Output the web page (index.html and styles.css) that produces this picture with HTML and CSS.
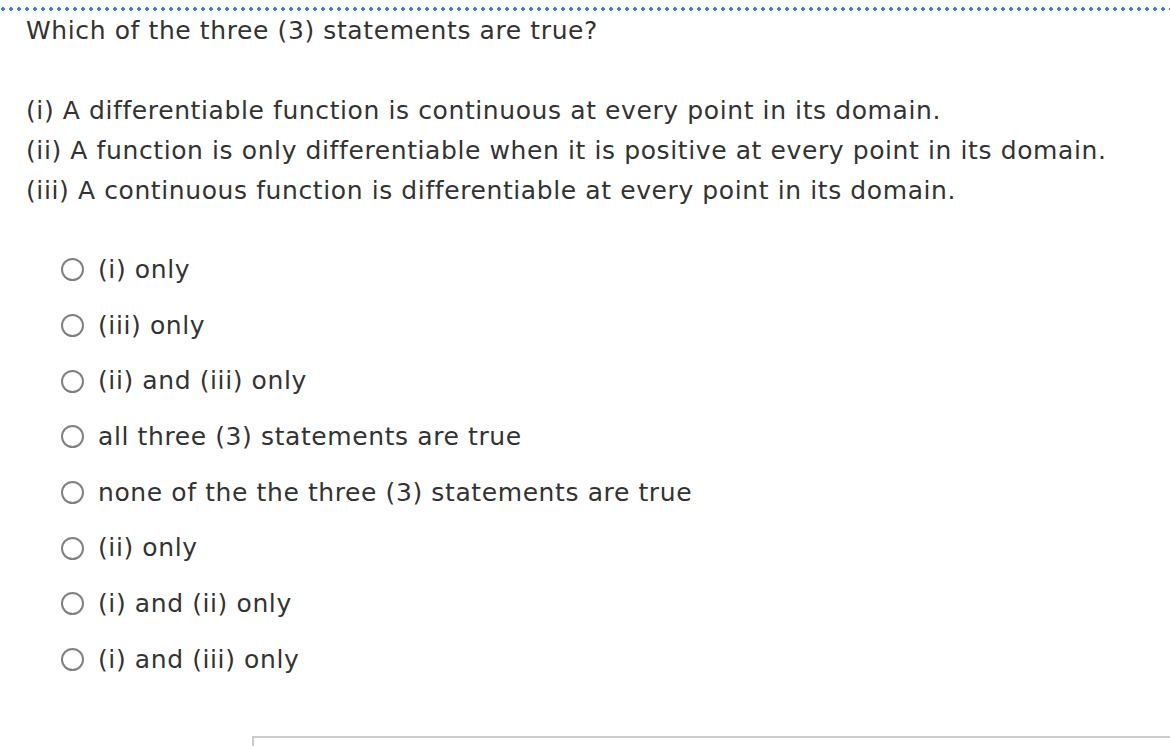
FILE: index.html
```html
<!DOCTYPE html>
<html>
<head>
<meta charset="utf-8">
<link rel="stylesheet" href="styles.css">
</head>
<body>
<div class="question">
  <div class="dots"></div>
  <div class="content">
    <p class="prompt">Which of the three (3) statements are true?</p>
    <div class="statements">
      <p>(i) A differentiable function is continuous at every point in its domain.</p>
      <p>(ii) A function is only differentiable when it is positive at every point in its domain.</p>
      <p>(iii) A continuous function is differentiable at every point in its domain.</p>
    </div>
    <ul class="options">
      <li><span class="radio"></span><span>(i) only</span></li>
      <li><span class="radio"></span><span>(iii) only</span></li>
      <li><span class="radio"></span><span>(ii) and (iii) only</span></li>
      <li><span class="radio"></span><span>all three (3) statements are true</span></li>
      <li><span class="radio"></span><span>none of the the three (3) statements are true</span></li>
      <li><span class="radio"></span><span>(ii) only</span></li>
      <li><span class="radio"></span><span>(i) and (ii) only</span></li>
      <li><span class="radio"></span><span>(i) and (iii) only</span></li>
    </ul>
    <div class="answer-box"></div>
  </div>
</div>
</body>
</html>
```

FILE: styles.css
```css
html, body {
  margin: 0;
  padding: 0;
  background: #ffffff;
}
body {
  font-family: "DejaVu Sans", Verdana, sans-serif;
  color: #333333;
  font-size: 25px;
  letter-spacing: 0.6px;
  overflow: hidden;
  height: 746px;
}
.question {
  padding-top: 7px;
}
.dots {
  height: 4px;
  background-image: radial-gradient(circle at 2px 2px, #3b7fe0 1.7px, transparent 2.1px);
  background-size: 8px 4px;
  background-position: 1px 0;
  background-repeat: repeat-x;
}
.content {
  padding-left: 26px;
}
.prompt {
  margin: 0;
  line-height: 40px;
}
.statements {
  margin-top: 40px;
}
.statements p {
  margin: 0;
  line-height: 40px;
}
.options {
  list-style: none;
  margin: 40px 0 0 0;
  padding: 0 0 0 35px;
}
.options li {
  display: flex;
  align-items: center;
  gap: 14px;
  height: 55.7px;
  line-height: 40px;
}
.options li:first-child {
  margin-top: -9px;
}
.radio {
  width: 19px;
  height: 19px;
  border: 2px solid #808080;
  border-radius: 50%;
  flex-shrink: 0;
}
.answer-box {
  margin-left: 226px;
  margin-top: 48px;
  height: 40px;
  border-top: 2px solid #cccccc;
  border-left: 2px solid #cccccc;
}
```
